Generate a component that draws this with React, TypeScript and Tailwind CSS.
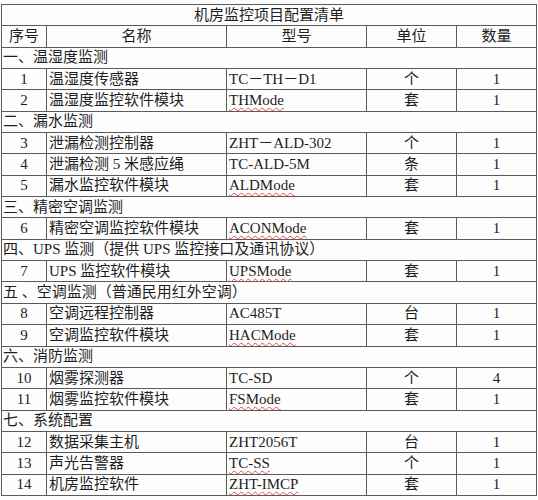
import React from "react";

type Item = { no: number; name: string; model: string; unit: string; qty: number; flag?: boolean };
type Section = { title: string; items: Item[] };

const SECTIONS: Section[] = [
  {
    title: "一、温湿度监测",
    items: [
      { no: 1, name: "温湿度传感器", model: "TC－TH－D1", unit: "个", qty: 1 },
      { no: 2, name: "温湿度监控软件模块", model: "THMode", unit: "套", qty: 1, flag: true },
    ],
  },
  {
    title: "二、漏水监测",
    items: [
      { no: 3, name: "泄漏检测控制器", model: "ZHT－ALD-302", unit: "个", qty: 1 },
      { no: 4, name: "泄漏检测 5 米感应绳", model: "TC-ALD-5M", unit: "条", qty: 1 },
      { no: 5, name: "漏水监控软件模块", model: "ALDMode", unit: "套", qty: 1, flag: true },
    ],
  },
  {
    title: "三、精密空调监测",
    items: [{ no: 6, name: "精密空调监控软件模块", model: "ACONMode", unit: "套", qty: 1, flag: true }],
  },
  {
    title: "四、UPS 监测（提供 UPS 监控接口及通讯协议）",
    items: [{ no: 7, name: "UPS 监控软件模块", model: "UPSMode", unit: "套", qty: 1, flag: true }],
  },
  {
    title: "五 、空调监测（普通民用红外空调）",
    items: [
      { no: 8, name: "空调远程控制器", model: "AC485T", unit: "台", qty: 1 },
      { no: 9, name: "空调监控软件模块", model: "HACMode", unit: "套", qty: 1, flag: true },
    ],
  },
  {
    title: "六、消防监测",
    items: [
      { no: 10, name: "烟雾探测器", model: "TC-SD", unit: "个", qty: 4 },
      { no: 11, name: "烟雾监控软件模块", model: "FSMode", unit: "套", qty: 1, flag: true },
    ],
  },
  {
    title: "七、系统配置",
    items: [
      { no: 12, name: "数据采集主机", model: "ZHT2056T", unit: "台", qty: 1 },
      { no: 13, name: "声光告警器", model: "TC-SS", unit: "个", qty: 1, flag: true },
      { no: 14, name: "机房监控软件", model: "ZHT-IMCP", unit: "套", qty: 1, flag: true },
    ],
  },
];

const cell = "border border-[#5a5a5a] p-0 align-middle leading-none";

export default function App() {
  return (
    <div
      className="w-[538px] h-[500px] bg-[#fdfdfd] text-[#1e1e1e] text-[15px] pt-[4px] pl-[1px]"
      style={{ fontFamily: "'Liberation Serif', 'Noto Sans CJK SC', serif" }}
    >
      <table className="table-fixed border-collapse w-[535px] border border-[#4a4a4a]">
        <colgroup>
          <col className="w-[45px]" />
          <col className="w-[180px]" />
          <col className="w-[140px]" />
          <col className="w-[90px]" />
          <col className="w-[80px]" />
        </colgroup>
        <tbody>
          <tr className="h-[21.35px]">
            <td colSpan={5} className={`${cell} text-center`}>机房监控项目配置清单</td>
          </tr>
          <tr className="h-[21.35px]">
            <td className={`${cell} text-center`}>序号</td>
            <td className={`${cell} text-center`}>名称</td>
            <td className={`${cell} text-center`}>型号</td>
            <td className={`${cell} text-center`}>单位</td>
            <td className={`${cell} text-center`}>数量</td>
          </tr>
          {SECTIONS.map((s) => (
            <React.Fragment key={s.title}>
              <tr className="h-[21.35px]">
                <td colSpan={5} className={`${cell} pl-[1px]`}>{s.title}</td>
              </tr>
              {s.items.map((it) => (
                <tr key={it.no} className="h-[21.35px]">
                  <td className={`${cell} text-center`}>{it.no}</td>
                  <td className={`${cell} pl-[2px] whitespace-nowrap`}>{it.name}</td>
                  <td className={`${cell} pl-[2px] whitespace-nowrap`}>
                    {it.flag ? (
                      <span className="underline decoration-wavy decoration-[#e05050] decoration-1 underline-offset-2">{it.model}</span>
                    ) : (
                      it.model
                    )}
                  </td>
                  <td className={`${cell} text-center`}>{it.unit}</td>
                  <td className={`${cell} text-center`}>{it.qty}</td>
                </tr>
              ))}
            </React.Fragment>
          ))}
        </tbody>
      </table>
    </div>
  );
}
